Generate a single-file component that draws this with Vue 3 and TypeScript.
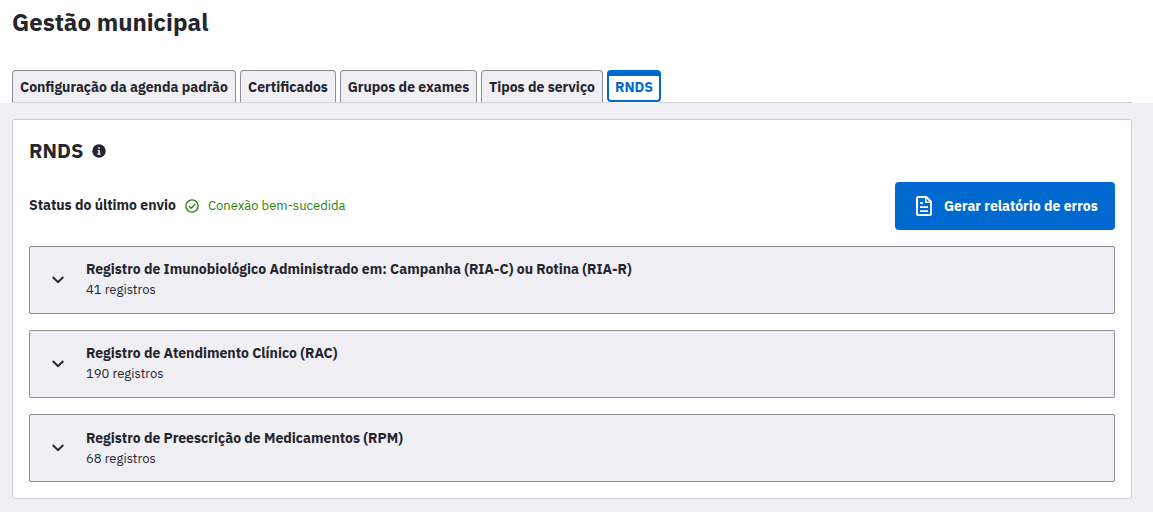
<script setup lang="ts">
interface Tab {
  id: string
  label: string
}

interface RecordGroup {
  id: string
  title: string
  count: number
}

const tabs: Tab[] = [
  { id: 'agenda', label: 'Configuração da agenda padrão' },
  { id: 'certificados', label: 'Certificados' },
  { id: 'exames', label: 'Grupos de exames' },
  { id: 'servicos', label: 'Tipos de serviço' },
  { id: 'rnds', label: 'RNDS' },
]
const activeTab = 'rnds'

const groups: RecordGroup[] = [
  { id: 'ria', title: 'Registro de Imunobiológico Administrado em: Campanha (RIA-C) ou Rotina (RIA-R)', count: 41 },
  { id: 'rac', title: 'Registro de Atendimento Clínico (RAC)', count: 190 },
  { id: 'rpm', title: 'Registro de Preescrição de Medicamentos (RPM)', count: 68 },
]
</script>

<template>
  <div class="page">
    <header class="header">
      <h1 class="title">Gestão municipal</h1>
      <nav class="tabs">
        <button
          v-for="tab in tabs"
          :key="tab.id"
          type="button"
          :class="['tab', `tab-${tab.id}`, { active: tab.id === activeTab }]"
        >{{ tab.label }}</button>
      </nav>
    </header>

    <main class="card">
      <h2 class="heading">
        <span>RNDS</span>
        <svg class="info" viewBox="0 0 14 14" width="14" height="14">
          <circle cx="7" cy="7" r="6.7" fill="#25252d" />
          <path d="M5.6 5.9H7.9V9.6H8.7V10.7H5.3V9.6H6.2V6.9H5.6ZM6.1 3.2H7.9V4.8H6.1Z" fill="#f0f0f2" />
        </svg>
      </h2>

      <div class="status-bar">
        <span class="status-label">Status do último envio</span>
        <svg class="check" viewBox="0 0 14 14" width="14" height="14" fill="none" stroke="#2c850c">
          <circle cx="7" cy="7" r="6.15" stroke-width="1.4" />
          <path d="M3.9 7.2L6.1 9.3L10.3 5" stroke-width="1.4" />
        </svg>
        <span class="status-value">Conexão bem-sucedida</span>
        <button type="button" class="report">
          <svg viewBox="0 0 16 20" width="16" height="20" fill="none" stroke="#fff" stroke-width="2">
            <path d="M10.2 1H2Q1 1 1 2V18Q1 19 2 19H14Q15 19 15 18V5.8Z" stroke-linejoin="round" />
            <path d="M9.8 1.2V6.2H14.8" stroke-width="1.5" />
            <path d="M4 7.1H7M4 11.1H12M4 15.1H12" stroke-width="1.8" />
          </svg>
          <span>Gerar relatório de erros</span>
        </button>
      </div>

      <section class="groups">
        <article v-for="group in groups" :key="group.id" :class="['group', `group-${group.id}`]">
          <svg class="chevron" viewBox="0 0 12 8" width="12" height="8" fill="none" stroke="#25252d" stroke-width="2">
            <path d="M.7 1L6 6.2L11.3 1" />
          </svg>
          <div class="group-text">
            <div class="group-title">{{ group.title }}</div>
            <div class="group-count">{{ group.count }} registros</div>
          </div>
        </article>
      </section>
    </main>
  </div>
</template>

<style>
body {
  margin: 0;
  background: #f0eff4;
}
</style>

<style scoped>
.page {
  box-sizing: border-box;
  height: 512px;
  background: #f0eff4;
  color: #25252d;
  font-family: "IBM Plex Sans", "Open Sans", sans-serif;
  font-size: 14px;
}
.header {
  box-sizing: border-box;
  height: 103px;
  padding: 6px 21px 0 12px;
  background: #fff;
}
.title {
  margin: 0;
  height: 64px;
  font-size: 24px;
  line-height: 33px;
  font-weight: 700;
}
.tabs {
  display: flex;
  gap: 4px;
  height: 32px;
  border-bottom: 1px solid #d2d1da;
}
.tab {
  box-sizing: border-box;
  height: 32px;
  padding: 0;
  border: 1px solid #8c8b98;
  border-bottom: 0;
  border-radius: 4px 4px 0 0;
  background: #f0eff4;
  color: inherit;
  font: inherit;
  font-weight: 700;
  line-height: 20px;
  white-space: nowrap;
}
.tab-agenda { width: 224px; }
.tab-certificados { width: 96px; }
.tab-exames { width: 137px; }
.tab-servicos { width: 122px; }
.tab-rnds { width: 54px; }
.tab.active {
  border: 2px solid #0069d0;
  border-top-width: 6px;
  border-radius: 4px;
  padding: 0 0 2px;
  background: #fff;
  box-shadow: 0 1px 0 #fff;
  color: #0069d0;
  line-height: 22px;
}
.card {
  box-sizing: border-box;
  width: 1120px;
  height: 380px;
  margin: 16px 0 0 12px;
  padding: 16px;
  border: 1px solid #d2d1da;
  border-radius: 2px;
  background: #fff;
}
.heading {
  display: flex;
  align-items: center;
  gap: 9px;
  height: 30px;
  margin: 0 0 16px;
  font-size: 20px;
  font-weight: 700;
}
.heading span {
  padding-bottom: 2px;
}
.status-bar {
  display: flex;
  align-items: center;
  height: 48px;
}
.status-label {
  width: 156px;
  padding-bottom: 2px;
  font-weight: 700;
}
.status-value {
  margin-left: 9px;
  padding-bottom: 2px;
  color: #2c850c;
  font-size: 13px;
}
.report {
  display: flex;
  align-items: center;
  gap: 12px;
  box-sizing: border-box;
  width: 220px;
  height: 48px;
  margin-left: auto;
  padding: 0 0 0 21px;
  border: 0;
  border-radius: 4px;
  background: #0069d0;
  color: #fff;
  font: inherit;
  font-weight: 700;
  white-space: nowrap;
}
.groups {
  display: flex;
  flex-direction: column;
  gap: 16px;
  margin-top: 16px;
}
.group {
  display: flex;
  align-items: center;
  gap: 22px;
  box-sizing: border-box;
  height: 68px;
  padding: 0 22px;
  border: 1px solid #8c8b98;
  border-radius: 2px;
  background: #f0eff4;
}
.group-title {
  font-weight: 700;
  line-height: 21px;
}
.group-count {
  font-size: 13px;
  line-height: 20px;
}
.group-text {
  padding-bottom: 1px;
}
.group-rpm .group-text {
  padding: 1px 0 0;
}
</style>
